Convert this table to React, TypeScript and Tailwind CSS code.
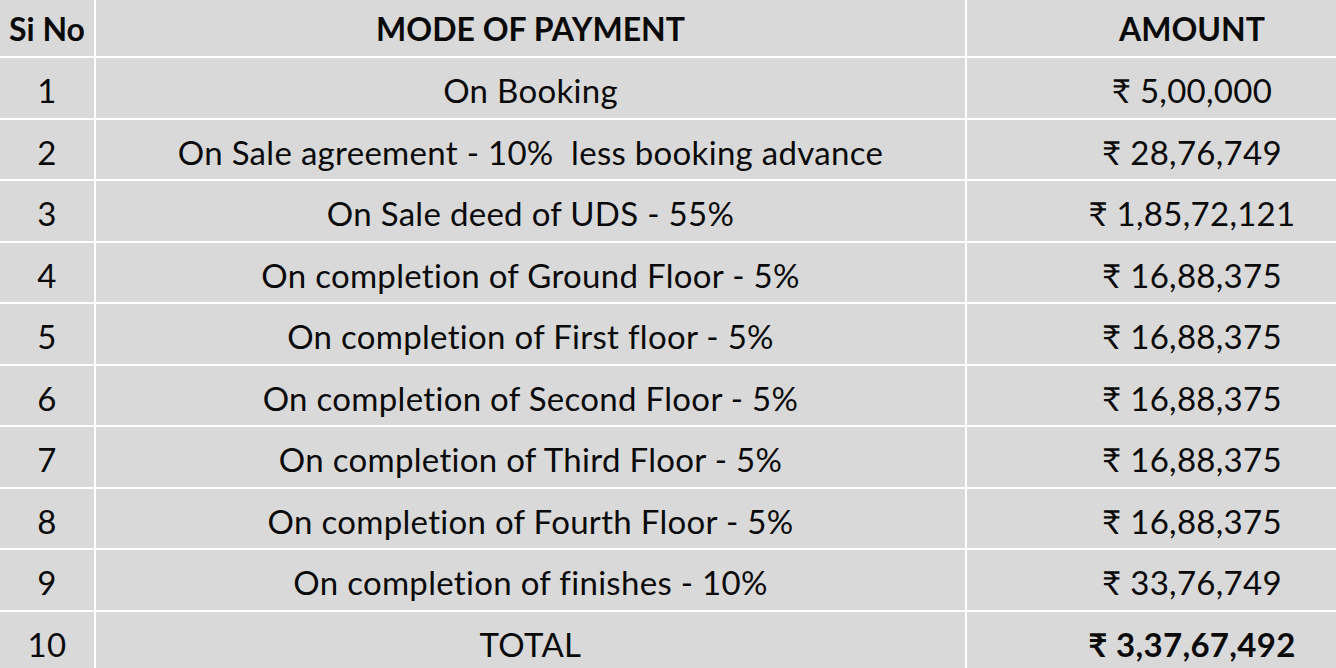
import React from "react";

const rows: [string, string, string][] = [
  ["1", "On Booking", "₹ 5,00,000"],
  ["2", "On Sale agreement - 10%\u00a0 less booking advance", "₹ 28,76,749"],
  ["3", "On Sale deed of UDS - 55%", "₹ 1,85,72,121"],
  ["4", "On completion of Ground Floor - 5%", "₹ 16,88,375"],
  ["5", "On completion of First floor - 5%", "₹ 16,88,375"],
  ["6", "On completion of Second Floor - 5%", "₹ 16,88,375"],
  ["7", "On completion of Third Floor - 5%", "₹ 16,88,375"],
  ["8", "On completion of Fourth Floor - 5%", "₹ 16,88,375"],
  ["9", "On completion of finishes - 10%", "₹ 33,76,749"],
];

const cell = "bg-[#d9d9d9] flex items-center justify-center pt-[6px] text-[33px] tracking-[0.3px]";
const head = "bg-[#d9d9d9] flex items-center justify-center pt-[1px] font-bold text-[32px]";

export default function App() {
  return (
    <div
      className="w-[1336px] h-[668px] overflow-hidden bg-white text-[#0a0a0a]"
      style={{ fontFamily: "Lato, 'Noto Sans', 'DejaVu Sans', sans-serif" }}
    >
      <div className="w-[1417px] grid grid-cols-[94px_869px_450px] grid-rows-[56px_repeat(10,59.5px)] gap-x-[2px] gap-y-[2px] leading-none [font-variant-ligatures:none]">
        <div className={head}>Si No</div>
        <div className={head}>MODE OF PAYMENT</div>
        <div className={head}>AMOUNT</div>
        {rows.map(([n, m, a]) => (
          <React.Fragment key={n}>
            <div className={cell}>{n}</div>
            <div className={`${cell} whitespace-pre`}>{m}</div>
            <div className={cell}>{a}</div>
          </React.Fragment>
        ))}
        <div className={cell}>10</div>
        <div className={cell}>TOTAL</div>
        <div className={`${cell} font-bold`}>₹ 3,37,67,492</div>
      </div>
    </div>
  );
}
